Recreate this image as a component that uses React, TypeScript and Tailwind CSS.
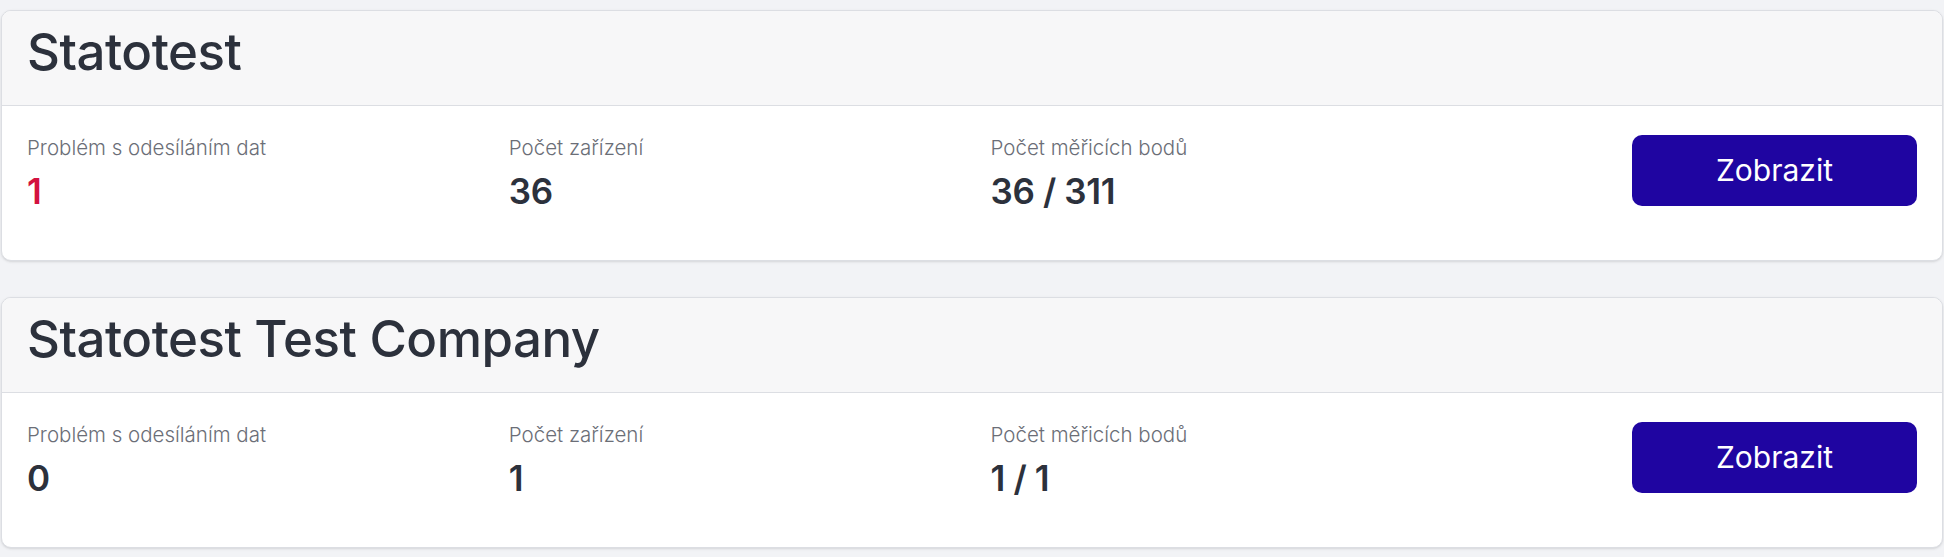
import React from 'react';

type Company = {
  name: string;
  problems: number;
  devices: number;
  points: string;
};

const companies: Company[] = [
  { name: 'Statotest', problems: 1, devices: 36, points: '36 / 311' },
  { name: 'Statotest Test Company', problems: 0, devices: 1, points: '1 / 1' },
];

const Stat: React.FC<{ label: string; value: React.ReactNode; danger?: boolean }> = ({ label, value, danger }) => (
  <div>
    <div className="text-[20.5px] leading-[28px] font-light text-[#6b6e77]">{label}</div>
    <div
      className={`mt-[8px] text-[35px] leading-[42px] font-semibold tracking-[-0.01em] ${danger ? 'text-[#d3123f]' : 'text-[#2c313c]'}`}
    >
      {value}
    </div>
  </div>
);

const CompanyCard: React.FC<{ company: Company }> = ({ company }) => (
  <div className="bg-white border border-[#dcdee3] rounded-[10px] shadow-sm overflow-hidden">
    <div className="bg-[#f7f7f8] border-b border-[#dcdee3] px-[25px] pt-[10px] pb-[23px]">
      <h2 className="text-[51px] leading-[61px] font-medium tracking-[-0.01em] text-[#2c313c]">{company.name}</h2>
    </div>
    <div className="grid grid-cols-4 gap-[37px] items-start px-[25px] pt-[28px] pb-[48px]">
      <Stat label="Problém s odesíláním dat" value={company.problems} danger={company.problems > 0} />
      <Stat label="Počet zařízení" value={company.devices} />
      <Stat label="Počet měřicích bodů" value={company.points} />
      <div className="flex justify-end">
        <button className="w-[285px] h-[71px] mt-[1px] rounded-[10px] bg-[#1f05a1] text-white text-[30px] font-normal hover:bg-[#1a0488]">
          Zobrazit
        </button>
      </div>
    </div>
  </div>
);

export default function App() {
  return (
    <div
      className="min-h-screen bg-[#f2f3f6] px-[1px] pt-[10px] flex flex-col gap-[36px]"
      style={{ fontFamily: 'Inter, "Liberation Sans", sans-serif' }}
    >
      {companies.map((c) => (
        <CompanyCard key={c.name} company={c} />
      ))}
    </div>
  );
}
